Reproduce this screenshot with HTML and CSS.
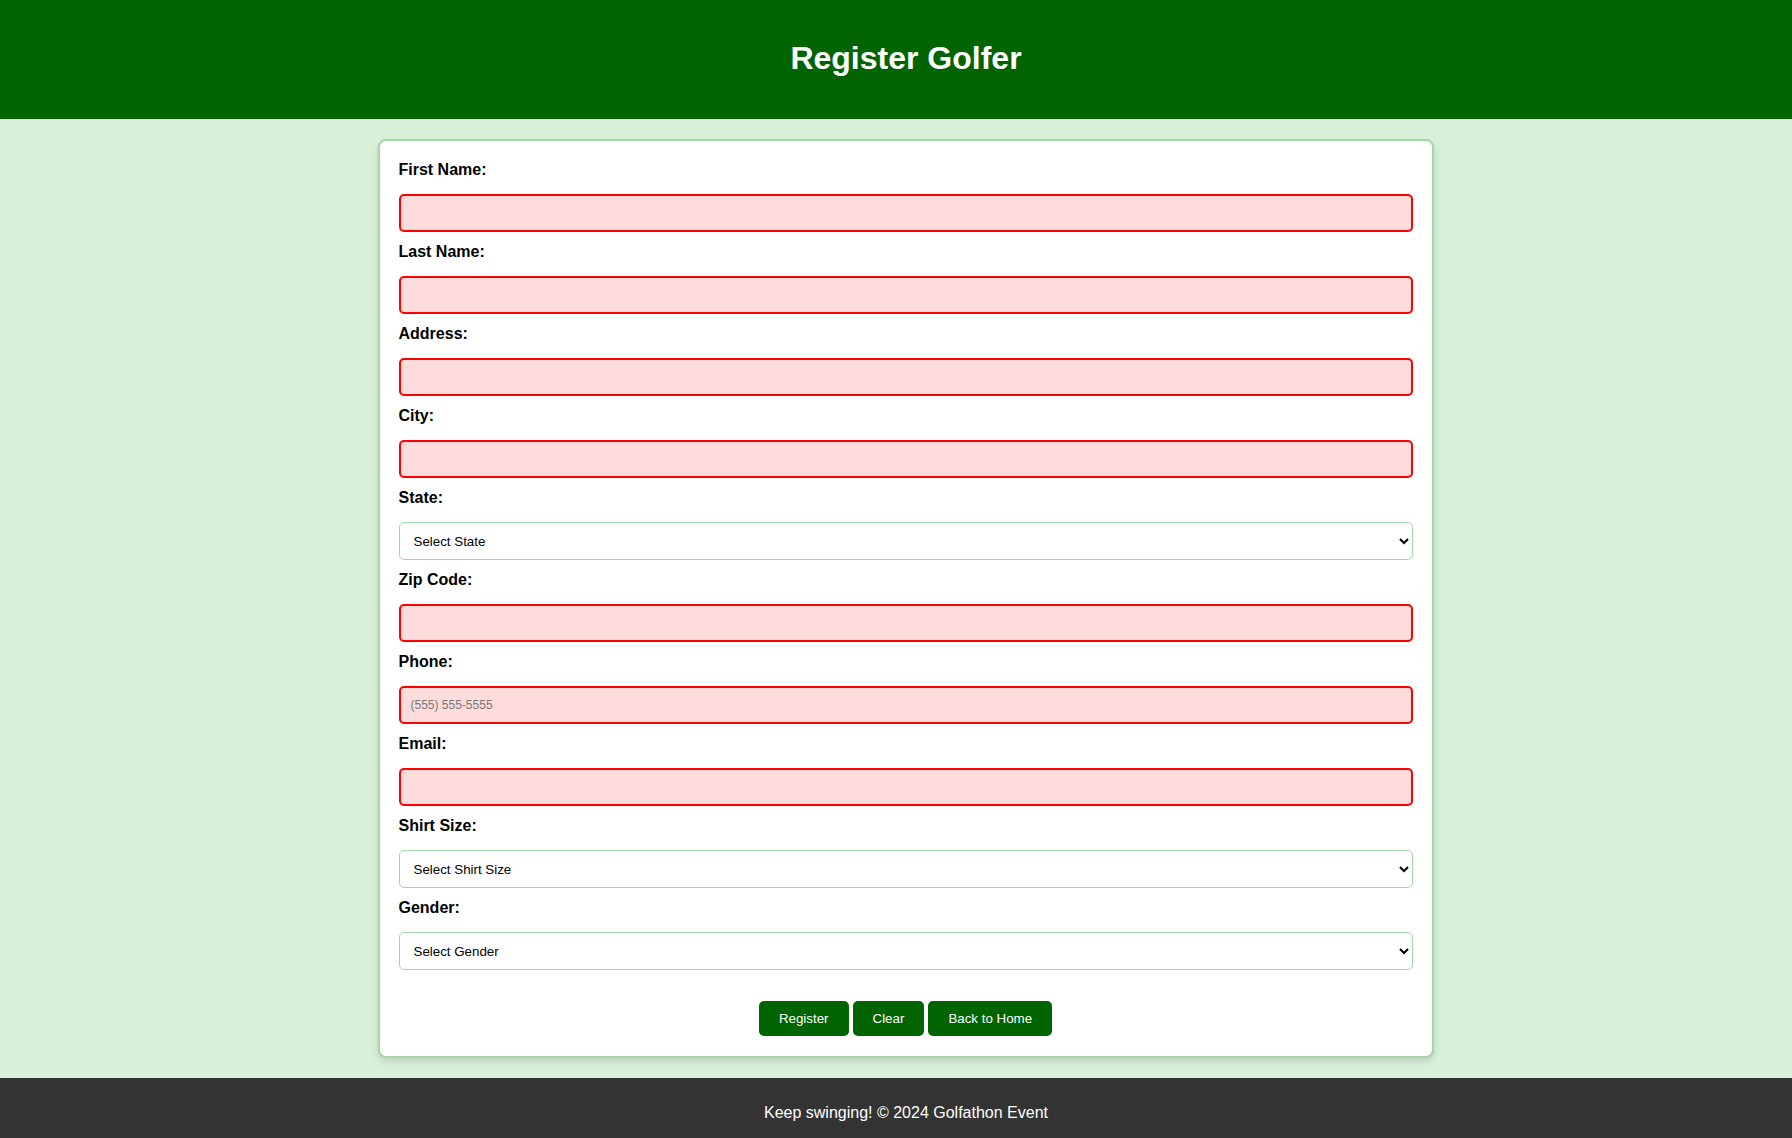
FILE: index.html
```html
<!DOCTYPE html>
<html lang="en">
<head>
<meta charset="utf-8">
<title>Register Golfer</title>
<link rel="stylesheet" href="styles.css">
</head>
<body>
<header class="site-header">
  <h1 class="site-title">Register Golfer</h1>
</header>
<main class="page">
  <form class="card">
    <label class="field-label" for="first">First Name:</label>
    <input class="field-input invalid" id="first" type="text">
    <label class="field-label" for="last">Last Name:</label>
    <input class="field-input invalid" id="last" type="text">
    <label class="field-label" for="addr">Address:</label>
    <input class="field-input invalid" id="addr" type="text">
    <label class="field-label" for="city">City:</label>
    <input class="field-input invalid" id="city" type="text">
    <label class="field-label" for="state">State:</label>
    <select class="field-select" id="state"><option>Select State</option></select>
    <label class="field-label" for="zip">Zip Code:</label>
    <input class="field-input invalid" id="zip" type="text">
    <label class="field-label" for="phone">Phone:</label>
    <input class="field-input invalid" id="phone" type="tel" placeholder="(555) 555-5555">
    <label class="field-label" for="email">Email:</label>
    <input class="field-input invalid" id="email" type="email">
    <label class="field-label" for="shirt">Shirt Size:</label>
    <select class="field-select" id="shirt"><option>Select Shirt Size</option></select>
    <label class="field-label" for="gender">Gender:</label>
    <select class="field-select" id="gender"><option>Select Gender</option></select>
    <div class="actions">
      <button class="btn" type="button">Register</button>
      <button class="btn" type="button">Clear</button>
      <button class="btn" type="button">Back to Home</button>
    </div>
  </form>
</main>
<footer class="site-footer">
  <p class="footer-text">Keep swinging! © 2024 Golfathon Event</p>
</footer>
</body>
</html>
```
FILE: styles.css
```css
* { box-sizing: border-box; }
html, body { margin: 0; padding: 0; }
body {
  font-family: "Liberation Sans", Arial, sans-serif;
  background: #d9f0d9;
  color: #000;
}
.site-header {
  background: #006400;
  color: #fff;
  padding: 20px 0 20px 20px;
  text-align: center;
}
.site-title {
  margin: 20px 0 22px 0;
  font-size: 32px;
  font-weight: bold;
  line-height: 37px;
}
.page {
  padding: 20px 0 20px 19px;
  display: flex;
  justify-content: center;
}
.card {
  width: 1056px;
  background: #fff;
  border: 2px solid #a5d6a7;
  border-radius: 8px;
  box-shadow: 0 4px 8px rgba(0, 0, 0, 0.12);
  padding: 19px 19px 20px 19px;
  display: flex;
  flex-direction: column;
}
.field-label {
  display: block;
  font-size: 16px;
  font-weight: bold;
  line-height: 18px;
  padding-top: 1px;
  margin-bottom: 15px;
}
.field-input {
  display: block;
  width: 100%;
  height: 38px;
  padding: 0 10px;
  font-family: "Liberation Sans", Arial, sans-serif;
  font-size: 12px;
  border: 2px solid #ff0000;
  border-radius: 5px;
  background: #ffdcdc;
  margin: 0 0 10px 0;
  outline: none;
}
.field-input::placeholder { color: #777; }
.field-select {
  display: block;
  width: 100%;
  height: 38px;
  padding: 0 10px;
  font-family: "Liberation Sans", Arial, sans-serif;
  font-size: 13.33px;
  color: #000;
  border: 1px solid #a5d6a7;
  border-radius: 5px;
  background: #fff;
  margin: 0 0 10px 0;
}
.actions {
  display: flex;
  justify-content: center;
  gap: 4px;
  margin-top: 21px;
}
.btn {
  background: #006400;
  color: #fff;
  border: none;
  border-radius: 5px;
  height: 35px;
  padding: 0 20px;
  font-family: "Liberation Sans", Arial, sans-serif;
  font-size: 13.33px;
  cursor: pointer;
}
.site-footer {
  background: #333;
  color: #fff;
  padding: 26px 0 24px 20px;
  text-align: center;
}
.footer-text {
  margin: 0;
  font-size: 16px;
  line-height: 18px;
}
```
